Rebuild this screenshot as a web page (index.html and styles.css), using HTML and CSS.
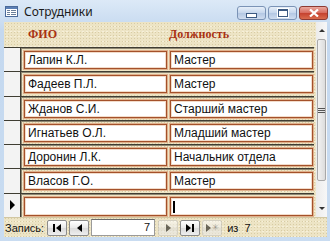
FILE: index.html
```html
<!DOCTYPE html>
<html lang="ru">
<head>
    <meta charset="UTF-8">
    <title>Сотрудники</title>
    <link rel="stylesheet" href="styles.css">
</head>
<body>
    <div class="window">
        <div class="titlebar">
            <svg class="app-icon" width="13" height="11" viewBox="0 0 13 11">
                <rect x="0.5" y="0.5" width="12" height="10" fill="#fff" stroke="#4a6a9a"/>
                <rect x="1" y="1" width="11" height="2" fill="#5b7fb5"/>
                <rect x="2" y="4" width="3" height="1" fill="#6a7f9a"/>
                <rect x="6" y="4" width="5" height="1" fill="#6a7f9a"/>
                <rect x="2" y="6" width="3" height="1" fill="#6a7f9a"/>
                <rect x="6" y="6" width="5" height="1" fill="#6a7f9a"/>
                <rect x="2" y="8" width="3" height="1" fill="#6a7f9a"/>
                <rect x="6" y="8" width="5" height="1" fill="#6a7f9a"/>
            </svg>
            <span class="title">Сотрудники</span>
            <div class="win-buttons">
                <div class="win-btn"><span class="glyph-min"></span></div>
                <div class="win-btn"><span class="glyph-max"></span></div>
                <div class="win-btn close">
                    <svg width="10" height="8" viewBox="0 0 10 8">
                        <path d="M1 0.5 L9 7.5 M9 0.5 L1 7.5" stroke="#fff" stroke-width="2.2"/>
                    </svg>
                </div>
            </div>
        </div>

        <div class="client">
            <div class="form">
                <div class="form-main">
                    <div class="form-header">
                        <div class="label">ФИО</div>
                        <div class="label">Должность</div>
                    </div>

                    <div class="row">
                        <div class="selector"></div>
                        <div class="cells">
                            <div class="field">Лапин К.Л.</div>
                            <div class="field">Мастер</div>
                        </div>
                    </div>
                    <div class="row">
                        <div class="selector"></div>
                        <div class="cells">
                            <div class="field">Фадеев П.Л.</div>
                            <div class="field">Мастер</div>
                        </div>
                    </div>
                    <div class="row">
                        <div class="selector"></div>
                        <div class="cells">
                            <div class="field">Жданов С.И.</div>
                            <div class="field">Старший мастер</div>
                        </div>
                    </div>
                    <div class="row">
                        <div class="selector"></div>
                        <div class="cells">
                            <div class="field">Игнатьев О.Л.</div>
                            <div class="field">Младший мастер</div>
                        </div>
                    </div>
                    <div class="row">
                        <div class="selector"></div>
                        <div class="cells">
                            <div class="field">Доронин Л.К.</div>
                            <div class="field">Начальник отдела</div>
                        </div>
                    </div>
                    <div class="row">
                        <div class="selector"></div>
                        <div class="cells">
                            <div class="field">Власов Г.О.</div>
                            <div class="field">Мастер</div>
                        </div>
                    </div>
                    <div class="row new-row">
                        <div class="selector current"><span class="arrow"></span></div>
                        <div class="cells">
                            <div class="field"></div>
                            <div class="field"><span class="caret"></span></div>
                        </div>
                    </div>
                </div>

                <div class="scrollbar">
                    <div class="sb-arrow up"></div>
                    <div class="sb-track">
                        <div class="sb-thumb"><span class="grip"></span></div>
                    </div>
                    <div class="sb-arrow down"></div>
                </div>
            </div>

            <div class="navbar">
                <span class="nav-label">Запись:</span>
                <div class="nav-btn"><span class="bar"></span><span class="tri left"></span></div>
                <div class="nav-btn"><span class="tri left"></span></div>
                <div class="nav-input">7</div>
                <div class="nav-btn disabled"><span class="tri right"></span></div>
                <div class="nav-btn"><span class="tri right"></span><span class="bar"></span></div>
                <div class="nav-btn disabled"><span class="tri right"></span><span class="star">✳</span></div>
                <span class="nav-count">из&nbsp; 7</span>
            </div>
        </div>
    </div>
</body>
</html>
```

FILE: styles.css
```css
body {
    margin: 0;
    font-family: 'Liberation Sans', Arial, sans-serif;
    background: #c9dbef;
}

.window {
    width: 330px;
    height: 241px;
    background: linear-gradient(180deg, #dce9f7, #c4d8ef 30px, #c9dcf1);
    display: flex;
    flex-direction: column;
    overflow: hidden;
}

.titlebar {
    height: 22px;
    display: flex;
    align-items: center;
    padding-left: 5px;
}

.app-icon {
    margin-right: 6px;
    margin-top: 1px;
}

.title {
    font-family: 'Noto Sans', sans-serif;
    font-size: 12px;
    color: #1a1a1a;
    flex: 1;
    margin-top: 1px;
}

.win-buttons {
    display: flex;
    gap: 2px;
    margin-right: 2px;
    margin-top: 4px;
}

.win-btn {
    width: 27px;
    height: 12px;
    border: 1px solid #7b93b6;
    border-radius: 3px;
    background: linear-gradient(180deg, #e7eff9, #c6d6ec 50%, #b3c7e3 51%, #cfdcef);
    display: flex;
    align-items: center;
    justify-content: center;
}

.win-btn.close {
    border-color: #8d3a33;
    background: linear-gradient(180deg, #eaa99f, #d7695c 50%, #c5412f 51%, #d96a4c);
}

.glyph-min {
    width: 9px;
    height: 3px;
    margin-top: 5px;
    background: #fff;
    border: 1px solid #3d5a82;
}

.glyph-max {
    width: 8px;
    height: 5px;
    border: 1px solid #3d5a82;
    border-top-width: 2px;
    background: #fff;
    box-shadow: 0 0 0 1px #fff;
}

.client {
    flex: 1;
    margin: 0 3px 4px 4px;
    display: flex;
    flex-direction: column;
    background: #ede4c5;
    background-image:
        radial-gradient(#d8cca4 0.6px, transparent 0.9px),
        radial-gradient(#f6f0da 0.6px, transparent 0.9px);
    background-size: 3px 3px, 4px 5px;
    background-position: 0 0, 1px 2px;
}

.form {
    display: flex;
    height: 195px;
}

.form-main {
    flex: 1;
    display: flex;
    flex-direction: column;
}

.form-header {
    height: 25px;
    display: flex;
    align-items: center;
}

.form-header .label {
    font-family: 'Liberation Serif', 'Times New Roman', serif;
    font-weight: bold;
    font-size: 12px;
    color: #a83212;
    width: 145px;
    margin-top: 1px;
}

.form-header .label:first-child {
    padding-left: 24px;
    width: 141px;
}

.row {
    height: 23.33px;
    display: flex;
    border-top: 1px solid #3f3d33;
    box-shadow: inset 0 1px 0 #8e8772;
}

.selector {
    width: 16px;
    background: #f3f3f3;
    border-right: 1px solid #3f3d33;
    box-shadow: 1px 0 0 #8e8772;
    display: flex;
    align-items: center;
    justify-content: center;
}

.arrow {
    width: 0;
    height: 0;
    border-top: 5px solid transparent;
    border-bottom: 5px solid transparent;
    border-left: 5px solid #000;
    margin-left: 1px;
}

.cells {
    flex: 1;
    display: flex;
    gap: 3px;
    padding: 3px 0 0 3px;
}

.field {
    width: 138px;
    height: 15px;
    border: 1px solid #a4512a;
    box-shadow: 0 0 0 1px #e0b08c, inset 0 0 0 1px #f2dccb;
    background: #fff;
    padding: 1px 0 0 3px;
    font-size: 12px;
    line-height: 15px;
    color: #111;
    white-space: nowrap;
}

.new-row .field {
    height: 16px;
}

.caret {
    display: inline-block;
    width: 2px;
    height: 12px;
    background: #000;
    vertical-align: middle;
    margin-left: -1px;
}

.scrollbar {
    width: 15px;
    margin: 0 1px 0 2px;
    display: flex;
    flex-direction: column;
    background: linear-gradient(90deg, #ececec, #f7f7f7);
}

.sb-arrow {
    height: 17px;
    display: flex;
    align-items: center;
    justify-content: center;
}

.sb-arrow.up::before {
    content: '';
    border-left: 3px solid transparent;
    border-right: 3px solid transparent;
    border-bottom: 3px solid #333;
}

.sb-arrow.down::before {
    content: '';
    border-left: 3px solid transparent;
    border-right: 3px solid transparent;
    border-top: 3px solid #333;
}

.sb-track {
    flex: 1;
    padding: 0 1px;
}

.sb-thumb {
    height: 140px;
    border: 1px solid #a8a8a8;
    border-radius: 2px;
    background: linear-gradient(90deg, #f2f2f2, #dcdcdc);
    display: flex;
    align-items: center;
    justify-content: center;
}

.grip {
    width: 7px;
    height: 1px;
    background: #555;
    box-shadow: 0 2px 0 #555, 0 4px 0 #555;
    margin-top: -4px;
}

.navbar {
    flex: 1;
    display: flex;
    align-items: center;
    font-size: 11px;
    color: #111;
    border-top: 1px solid #d2c7a2;
    padding-left: 1px;
}

.nav-label {
    margin-right: 3px;
}

.nav-btn {
    width: 18px;
    height: 14px;
    border: 1px solid #8c8c8c;
    border-radius: 2px;
    background: linear-gradient(180deg, #ffffff, #e9e9e9 50%, #dadada 51%, #eeeeee);
    margin-right: 2px;
    display: flex;
    align-items: center;
    justify-content: center;
    gap: 1px;
}

.nav-btn.disabled {
    border-color: #c0c0c0;
    opacity: 0.55;
}

.tri.left {
    width: 0;
    height: 0;
    border-top: 4px solid transparent;
    border-bottom: 4px solid transparent;
    border-right: 5px solid #000;
}

.tri.right {
    width: 0;
    height: 0;
    border-top: 4px solid transparent;
    border-bottom: 4px solid transparent;
    border-left: 5px solid #000;
}

.bar {
    width: 2px;
    height: 8px;
    background: #000;
}

.star {
    font-size: 8px;
    color: #555;
    line-height: 8px;
}

.nav-input {
    width: 58px;
    height: 15px;
    border: 1px solid #9a9a9a;
    border-top-color: #6a6a6a;
    background: #fff;
    text-align: right;
    padding-right: 4px;
    line-height: 15px;
    margin-right: 3px;
    font-size: 11px;
}

.nav-count {
    margin-left: 3px;
}
```
